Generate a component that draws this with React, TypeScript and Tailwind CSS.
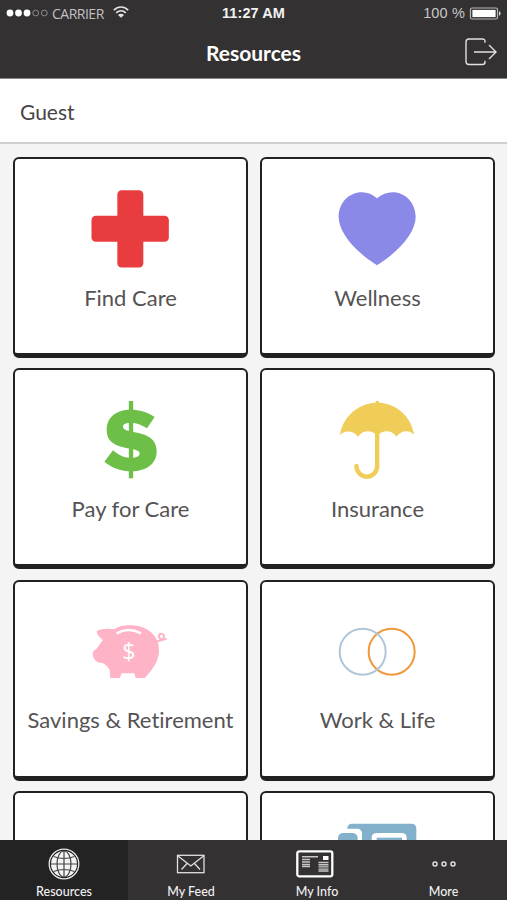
import type { ReactNode } from 'react';

function StatusBar() {
  return (
    <div className="grid h-[26px] grid-cols-3 items-center">
      <div className="flex items-center pl-[6px]">
        <svg width="43" height="8" viewBox="0 0 43 8" fill="#fff">
          <circle cx="4" cy="4" r="3.4" />
          <circle cx="12.5" cy="4" r="3.4" />
          <circle cx="21" cy="4" r="3.4" />
          <circle cx="29.7" cy="4" r="2.9" fill="none" stroke="#8d8b8c" />
          <circle cx="38.3" cy="4" r="2.9" fill="none" stroke="#8d8b8c" />
        </svg>
        <span className="mt-[1px] ml-[3px] w-[53px] font-['Open_Sans',sans-serif] text-[14px] leading-none tracking-[-0.5px] text-[#c2c0c1]">CARRIER</span>
        <svg className="mb-[2px] ml-[8px]" width="16" height="12" viewBox="0 0 16 12" fill="none" stroke="#e4e2e3" strokeWidth="1.7">
          <path d="M.8 4.2C5-.1 11-.1 15.2 4.2" />
          <path d="M3.2 6.9c2.9-2.7 6.7-2.7 9.6 0" />
          <path d="M5 8.9c1.9-1.7 4.1-1.7 6 0l-3 2.9z" fill="#e4e2e3" stroke="none" />
        </svg>
      </div>
      <div className="text-center font-['Liberation_Sans',sans-serif] text-[14.5px] leading-none font-bold tracking-[0.1px] text-[#f2f2f2]">11:27 AM</div>
      <div className="flex items-center justify-end pr-[6px]">
        <span className="font-['Liberation_Sans',sans-serif] text-[14.5px] leading-none tracking-[0.15px] text-[#c9c7c8]">100 %</span>
        <svg className="ml-[4px]" width="32" height="13" viewBox="0 0 32 13">
          <rect x="1.5" y="1" width="27" height="11" rx="1.5" fill="none" stroke="#b7b5b6" strokeWidth="1.2" />
          <rect x="3.4" y="2.9" width="23.2" height="7.2" fill="#fff" />
          <path d="M30 4.3q1.6.4 1.6 2.2T30 8.700z" fill="#ddd" />
        </svg>
      </div>
    </div>
  );
}

function Header() {
  return (
    <header className="h-[79px] shrink-0 border-b border-[#8b898a] bg-[#333132]">
      <StatusBar />
      <div className="grid h-[52px] grid-cols-[1fr_auto_1fr] items-center">
        <h1 className="col-start-2 text-[21px] leading-none font-bold text-white">Resources</h1>
        <svg className="mr-[10px] justify-self-end" width="33" height="28" viewBox="0 0 33 28" fill="none" stroke="#e3e1e2" strokeWidth="1.4">
          <path d="M21 4.800V3.500Q21 1 18.500 1H5Q2 1 2 4v19.500q0 3 3 3h13.500q2.500 0 2.500-2.500v-1.200" />
          <path d="M10 14h22M25 7l7 7-7 7" />
        </svg>
      </div>
    </header>
  );
}

function Icon({ box, children }: { box: string; children: ReactNode }) {
  return (
    <svg className="mr-[1.5px] size-[78px] overflow-visible" viewBox={box}>
      {children}
    </svg>
  );
}

const cross = (
  <Icon box="274 121 234 234">
    <g fill="#e83c3f">
      <rect x="353" y="121.500" width="78" height="232" rx="13" />
      <rect x="275.500" y="198.500" width="232" height="78" rx="13" />
    </g>
  </Icon>
);

const heart = (
  <Icon box="256 121 234 234">
    <path fill="#8b89e8" d="M373 146C360 134 345 128 328 128C288 128 258 160 258 202C258 245 300 300 373 347C446 300 489 245 489 202C489 160 458 128 420 128C403 128 387 134 373 146Z" />
  </Icon>
);

const dollar = (
  <Icon box="94 36 234 234">
    <g fill="#6dbf47">
      <path d="M285 84C262 68 240 62 213 62C168 62 141 86 141 122C141 160 168 170 205 178C230 182 240 186 240 193C240 203 228 207 213 207C193 207 175 197 160 184L134 218C158 238 186 247 215 247C262 247 291 224 291 187C291 150 265 138 225 130C200 125 190 121 190 113C190 104 200 101 215 101C232 101 248 109 262 118Z" />
      <rect x="207.500" y="36" width="13" height="232" />
    </g>
  </Icon>
);

const umbrella = (
  <Icon box="85 36 234 234">
    <path fill="#f0cc58" d="M91 138C99 84 144 44 197 41a6 6 0 0 1 12 0C262 44 306 84 313 137C298 121 274 124 260 143C248 124 222 122 208 136H197C185 122 158 124 145 143C131 124 106 123 91 138Z" />
    <path d="M202.500 130V232a31 31 0 0 1-62 0v-1" fill="none" stroke="#f0cc58" strokeWidth="13" strokeLinecap="round" />
  </Icon>
);

const pig = (
  <Icon box="94 9 234 234">
    <path fill="#ffb3c7" d="M111 64C118 56 148 54 165 58C180 42 240 40 268 62C290 78 299 100 298 125C296 158 276 178 266 192L255 204H228L224 190H186L180 204H152L150 180C143 168 134 158 122 158C112 158 106 152 103 145C98 135 98 122 107 119C113 117 122 98 130 90C120 82 112 76 111 64Z" />
    <path d="M171 70Q205 50 244 70" fill="none" stroke="#fff" strokeWidth="8" />
    <path d="M292 94C309 93 316 82 312 75C307 68 296 72 298 80C300 91 314 92 321 85" fill="none" stroke="#ffb3c7" strokeWidth="6" />
    <text x="208" y="149" textAnchor="middle" fontSize="70" fill="#fff" className="font-['Open_Sans',sans-serif]">$</text>
  </Icon>
);

const rings = (
  <Icon box="85 9 234 234">
    <g fill="none" strokeWidth="6">
      <circle cx="246" cy="125" r="69" stroke="#f0983a" />
      <circle cx="159" cy="125" r="69" stroke="#b0c6d8" />
    </g>
  </Icon>
);

const cards = (
  <Icon box="256 133 234 234">
    <rect x="284" y="132" width="207" height="180" rx="14" fill="#83b0cb" />
    <rect x="270" y="147" width="58" height="160" rx="14" fill="#fff" />
    <rect x="256" y="160" width="59" height="160" rx="15" fill="#83b0cb" />
    <rect x="357" y="160" width="105" height="90" rx="14" fill="#fff" />
    <rect x="372" y="174" width="76" height="60" fill="#83b0cb" />
  </Icon>
);

const tiles = [
  { label: 'Find Care', icon: cross },
  { label: 'Wellness', icon: heart },
  { label: 'Pay for Care', icon: dollar },
  { label: 'Insurance', icon: umbrella },
  { label: 'Savings & Retirement', icon: pig },
  { label: 'Work & Life', icon: rings },
  { label: '', icon: null },
  { label: '', icon: cards },
];

function Tile({ label, icon }: { label: string; icon: ReactNode }) {
  return (
    <div className="flex h-[201px] flex-col items-center rounded-[6px] border-2 border-b-[5px] border-[#222021] bg-white pt-[31px]">
      {icon}
      <span className="mt-[14.5px] text-[22px] leading-[30px] [font-variant-ligatures:none] whitespace-nowrap text-[#555354]">{label}</span>
    </div>
  );
}

const globe = (
  <svg width="32" height="32" viewBox="0 0 32 32" fill="none">
    <circle cx="16" cy="16" r="14.800" stroke="#e8e8e8" strokeWidth="1.300" />
    <circle cx="16" cy="16" r="13" fill="#f4f4f4" />
    <g stroke="#454344" strokeWidth="1.200">
      <path d="M16 3v26M3 16h26M5.500 8.500Q16 12.500 26.500 8.500M5.500 23.500Q16 19.500 26.500 23.500" />
      <ellipse cx="16" cy="16" rx="7" ry="13" />
    </g>
  </svg>
);

const envelope = (
  <svg width="30" height="20" viewBox="0 0 30 20" fill="none" stroke="#e2e0e1" strokeWidth="1.300">
    <rect x="1.500" y="1.300" width="26.500" height="17.400" />
    <path d="M2 2l12.800 10L27.500 2M5.500 15.500l5.500-6M24 15.500l-5.500-6" />
  </svg>
);

const idCard = (
  <svg className="mr-[5px]" width="38" height="28" viewBox="0 0 38 28">
    <rect x="1.300" y="1.300" width="35" height="25" rx="2" fill="#333132" stroke="#fff" strokeWidth="2.300" />
    <g stroke="#c9c7c8" strokeWidth="1.400">
      <path d="M6 6.700h16M6 9.500h8M6 12h8M6 14.500h8M6 16.500h8M22.500 12.500h10M22.500 14.700h10M22.500 16.900h10M22.500 19.100h10M22.500 21h10" />
    </g>
    <rect x="27" y="6" width="5.500" height="4" fill="#fff" />
  </svg>
);

const dots = (
  <svg width="26" height="8" viewBox="0 0 26 8" fill="none" stroke="#e2e0e1" strokeWidth="1.500">
    <circle cx="4" cy="4" r="2" />
    <circle cx="13" cy="4" r="2" />
    <circle cx="22" cy="4" r="2" />
  </svg>
);

const tabs = [
  { label: 'Resources', icon: globe, active: true },
  { label: 'My Feed', icon: envelope, active: false },
  { label: 'My Info', icon: idCard, active: false },
  { label: 'More', icon: dots, active: false },
];

export default function App() {
  return (
    <div className="flex h-[900px] w-[507px] flex-col overflow-hidden bg-[#f4f4f4] font-['Lato',sans-serif]">
      <Header />
      <div className="flex h-[65px] shrink-0 items-center border-b-2 border-[#d0d0d0] bg-white pt-[2px] pl-[20px] text-[21px] text-[#474546]">Guest</div>
      <main className="min-h-0 flex-1 overflow-hidden px-[13px] pt-[13px]">
        <div className="grid grid-cols-[235px_235px] gap-x-[12px] gap-y-[10.4px]">
          {tiles.map((t, i) => (
            <Tile key={i} label={t.label} icon={t.icon} />
          ))}
        </div>
      </main>
      <nav className="grid h-[60px] shrink-0 grid-cols-[128px_126px_126px_127px] bg-[#333132]">
        {tabs.map((t) => (
          <div key={t.label} className={t.active ? 'flex flex-col items-center bg-[#232323]' : 'flex flex-col items-center'}>
            <div className="flex h-[48px] items-center">{t.icon}</div>
            <span className="-mt-[3px] text-[12.500px] leading-[14px] font-medium text-[#f0f0f0]">{t.label}</span>
          </div>
        ))}
      </nav>
    </div>
  );
}
